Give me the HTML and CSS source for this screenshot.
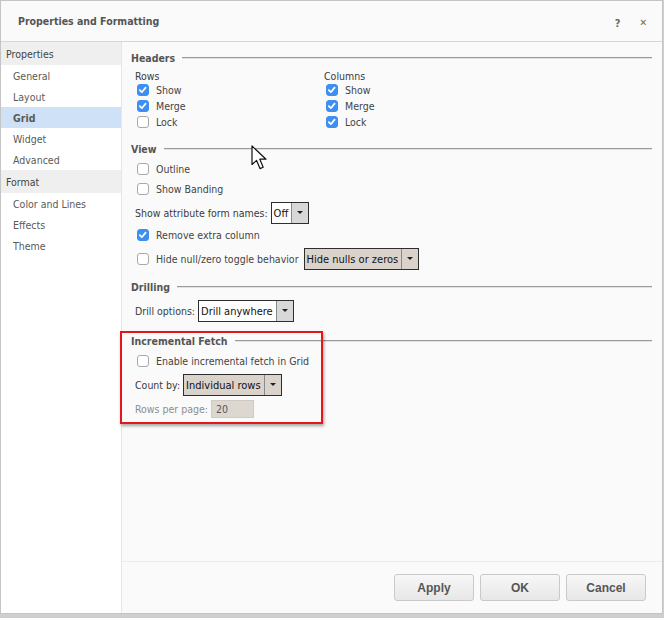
FILE: index.html
```html
<!DOCTYPE html>
<html lang="en">
<head>
  <meta charset="UTF-8" />
  <title>Properties and Formatting</title>
  <link rel="stylesheet" href="styles.css">
</head>
<body>
  <div class="dialog">
    <div class="titlebar">
      <span class="title">Properties and Formatting</span>
      <span class="tools"><span class="tool">?</span><span class="tool close">&#x2715;</span></span>
    </div>

    <div class="main">
      <nav class="sidebar">
        <div class="group">Properties</div>
        <div class="item">General</div>
        <div class="item">Layout</div>
        <div class="item active">Grid</div>
        <div class="item">Widget</div>
        <div class="item">Advanced</div>
        <div class="group">Format</div>
        <div class="item">Color and Lines</div>
        <div class="item">Effects</div>
        <div class="item">Theme</div>
      </nav>

      <div class="pane">
        <div class="content">
          <div class="section-title first"><span>Headers</span><i></i></div>
          <div class="columns">
            <div class="col">
              <div class="col-label">Rows</div>
              <div class="check tight"><span class="box on"></span>Show</div>
              <div class="check tight"><span class="box on"></span>Merge</div>
              <div class="check tight"><span class="box"></span>Lock</div>
            </div>
            <div class="col">
              <div class="col-label">Columns</div>
              <div class="check tight"><span class="box on"></span>Show</div>
              <div class="check tight"><span class="box on"></span>Merge</div>
              <div class="check tight"><span class="box on"></span>Lock</div>
            </div>
          </div>

          <div class="section-title view"><span>View</span><i></i></div>
          <div class="check"><span class="box"></span>Outline</div>
          <div class="check"><span class="box"></span>Show Banding</div>
          <div class="field">
            <label>Show attribute form names:</label>
            <span class="select"><span class="value">Off</span><span class="arrow"></span></span>
          </div>
          <div class="check"><span class="box on"></span>Remove extra column</div>
          <div class="check field">
            <span class="box"></span>Hide null/zero toggle behavior
            <span class="select tan gap"><span class="value">Hide nulls or zeros</span><span class="arrow"></span></span>
          </div>

          <div class="section-title drill"><span>Drilling</span><i></i></div>
          <div class="field">
            <label>Drill options:</label>
            <span class="select"><span class="value">Drill anywhere</span><span class="arrow"></span></span>
          </div>

          <div class="section-title fetch"><span>Incremental Fetch</span><i></i></div>
          <div class="check"><span class="box"></span>Enable incremental fetch in Grid</div>
          <div class="field">
            <label>Count by:</label>
            <span class="select tan"><span class="value">Individual rows</span><span class="arrow"></span></span>
          </div>
          <div class="field small">
            <label class="muted">Rows per page:</label>
            <span class="input">20</span>
          </div>
        </div>

        <div class="footer">
          <button class="btn">Apply</button>
          <button class="btn">OK</button>
          <button class="btn">Cancel</button>
        </div>
      </div>

      <!-- annotation + mouse pointer drawn over the dialog -->
      <div class="highlight"></div>
      <svg class="cursor" width="18" height="27" viewBox="0 0 18 27">
        <path d="M1 1 L1 19.5 L5.6 15.4 L9 23.6 L12.2 22.2 L8.8 14.2 L15 14.2 Z" fill="#fff" stroke="#111" stroke-width="1.2" stroke-linejoin="round"/>
      </svg>
    </div>
  </div>
</body>
</html>
```

FILE: styles.css
```css
:root {
  --text: #3a3a3a;
  --muted: #8e8e8e;
  --border: #d6d6d6;
  --pane: #fafafa;
  --blue: #3d8ff2;
  --tan: #d9d3cc;
}

body {
  margin: 0;
  background: #cfcfcf;
  font-family: "DejaVu Sans Condensed", "DejaVu Sans", "Liberation Sans", sans-serif;
  font-stretch: condensed;
  font-size: 10.5px;
  color: var(--text);
}

.dialog {
  box-sizing: border-box;
  width: 663px;
  height: 614px;
  border: 1px solid #c4c4c4;
  background: #fff;
  display: flex;
  flex-direction: column;
}

/* title bar */
.titlebar {
  box-sizing: border-box;
  height: 41px;
  flex: none;
  display: flex;
  align-items: center;
  justify-content: space-between;
  padding: 0 15px 0 17px;
  background: var(--pane);
  border-bottom: 1px solid var(--border);
}

.title {
  font-weight: bold;
  font-size: 10.5px;
  color: #555;
}

.tools {
  display: flex;
  gap: 19px;
  color: #6a6a6a;
  font-weight: bold;
  font-size: 11px;
  margin-top: 5px;
}

.close {
  font-size: 10px;
}

.main {
  flex: 1;
  display: flex;
  position: relative;
  min-height: 0;
}

/* left navigation */
.sidebar {
  box-sizing: border-box;
  width: 121px;
  flex: none;
  border-right: 1px solid #e6e6e6;
  background: #fff;
}

.group {
  height: 23px;
  line-height: 25px;
  padding-left: 5px;
  background: #efefef;
  color: #444;
}

.item {
  height: 21px;
  line-height: 23px;
  padding-left: 12px;
  color: #5a5a5a;
}

.item.active {
  background: #cfe1f6;
  font-weight: bold;
}

/* right pane */
.pane {
  flex: 1;
  display: flex;
  flex-direction: column;
  background: var(--pane);
}

.content {
  flex: 1;
  padding: 6px 10px 0 9px;
}

.section-title {
  display: flex;
  align-items: center;
  height: 20px;
  font-weight: bold;
  color: #555;
}

.section-title i {
  flex: 1;
  margin-left: 7px;
  border-top: 1px solid #9a9a9a;
  border-bottom: 1px solid #e2e2e2;
}

.section-title.view { margin-top: 9px; }
.section-title.drill { margin-top: 6px; }
.section-title.fetch { margin-top: 8px; }

.columns {
  display: flex;
  padding-left: 4px;
}

.col {
  width: 189px;
}

.col-label {
  height: 12px;
  line-height: 12px;
  margin-top: 2px;
}

.check {
  display: flex;
  align-items: center;
  height: 20px;
  padding-left: 6px;
  color: #444;
}

.col .check {
  padding-left: 2px;
}

.check.tight {
  height: 16px;
}

.box {
  box-sizing: border-box;
  width: 12px;
  height: 12px;
  margin-right: 7px;
  flex: none;
  border: 1px solid #a9a9a9;
  border-radius: 3px;
  background: #fff;
}

.box.on {
  border-color: var(--blue);
  background: var(--blue) url("data:image/svg+xml,%3Csvg xmlns='http://www.w3.org/2000/svg' width='12' height='12'%3E%3Cpath d='M2.8 6.1 L4.9 8.2 L8.6 3.6' fill='none' stroke='white' stroke-width='1.7' stroke-linecap='round' stroke-linejoin='round'/%3E%3C/svg%3E") -1px -1px no-repeat;
}

.field {
  display: flex;
  align-items: center;
  height: 24px;
  margin-top: 2px;
  padding-left: 4px;
}

.field.check {
  padding-left: 6px;
}

.field.small {
  height: 20px;
  margin-top: 2px;
}

.field label {
  margin-right: 3px;
}

.muted {
  color: var(--muted);
}

.select {
  box-sizing: border-box;
  display: inline-flex;
  height: 22px;
  border: 1px solid #2e2e2e;
  background: #fff;
  color: #111;
  font-size: 11px;
}

.select.gap {
  margin-left: 5px;
}

.select .value {
  display: flex;
  align-items: center;
  padding: 0 3px 0 2px;
}

.select .arrow {
  position: relative;
  width: 16px;
  border-left: 1px solid #8a8a8a;
  background: #d8d8d8;
}

.select .arrow::after {
  content: "";
  position: absolute;
  left: 5px;
  top: 8px;
  border-left: 3px solid transparent;
  border-right: 3px solid transparent;
  border-top: 3px solid #222;
}

.select.tan,
.select.tan .arrow {
  background: var(--tan);
}

.input {
  box-sizing: border-box;
  width: 43px;
  height: 18px;
  line-height: 16px;
  padding-left: 4px;
  border: 1px solid #cfcac4;
  background: #dcd7d1;
  color: #555;
}

/* footer buttons */
.footer {
  box-sizing: border-box;
  height: 52px;
  flex: none;
  display: flex;
  justify-content: flex-end;
  gap: 6px;
  padding: 12px 16px 0 0;
  border-top: 1px solid #ececec;
}

.btn {
  box-sizing: border-box;
  width: 80px;
  height: 27px;
  border: 1px solid #c9c9c9;
  border-radius: 3px;
  background: linear-gradient(#f7f7f7, #e7e7e7);
  font-family: "Liberation Sans", sans-serif;
  font-weight: bold;
  font-size: 12px;
  color: #555;
}

/* red annotation box */
.highlight {
  position: absolute;
  left: 119px;
  top: 289px;
  width: 203px;
  height: 93px;
  box-sizing: border-box;
  border: 2px solid #e3161c;
  box-shadow: 1px 2px 3px rgba(0, 0, 0, 0.35);
  pointer-events: none;
}

.cursor {
  position: absolute;
  left: 250px;
  top: 103px;
}
```
